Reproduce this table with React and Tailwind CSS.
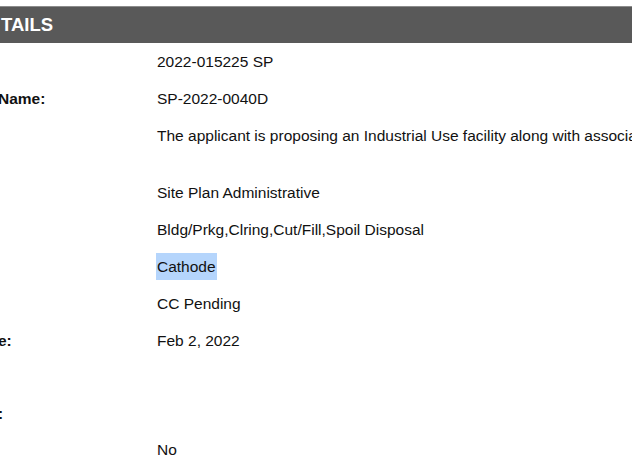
export default function App() {
  const rows = [
    { label: "", value: "2022-015225 SP" },
    { label: "Name:", value: "SP-2022-0040D" },
    { label: "", value: "The applicant is proposing an Industrial Use facility along with associated improvements.", tall: true },
    { label: "", value: "Site Plan Administrative" },
    { label: "", value: "Bldg/Prkg,Clring,Cut/Fill,Spoil Disposal" },
    { label: "", value: "Cathode", hl: true },
    { label: "", value: "CC Pending" },
    { label: "e:", value: "Feb 2, 2022" },
    { label: "", value: "", short: true },
    { label: ":", value: "", short: true },
    { label: "", value: "No" },
  ];
  return (
    <div className="w-[632px] h-[474px] overflow-hidden bg-white" style={{ fontFamily: '"Liberation Sans", Arial, sans-serif' }}>
      <div className="mt-[6px] border-t border-[#8c8c8c] bg-[#595959] h-[37px] flex items-center">
        <span className="text-white font-bold text-[18.5px] pl-[1px] whitespace-nowrap">TAILS</span>
      </div>
      <div className="flex flex-col">
        {rows.map((r, i) => (
          <div key={i} className={`flex items-start ${r.tall ? "h-[57px]" : r.short ? "h-[36px]" : "h-[37px]"}`}>
            <div className="w-[157px] shrink-0 h-[37px] flex items-center overflow-hidden">
              <span className="font-bold text-[15.5px] text-[#111] whitespace-nowrap -ml-[2px]">{r.label}</span>
            </div>
            <div className="h-[37px] flex items-center whitespace-nowrap">
              <span className={`text-[15.5px] text-[#111] ${r.hl ? "bg-[#b5d5fc] -ml-[1px] px-[1px] py-[2px]" : ""}`}>{r.value}</span>
            </div>
          </div>
        ))}
      </div>
    </div>
  );
}
